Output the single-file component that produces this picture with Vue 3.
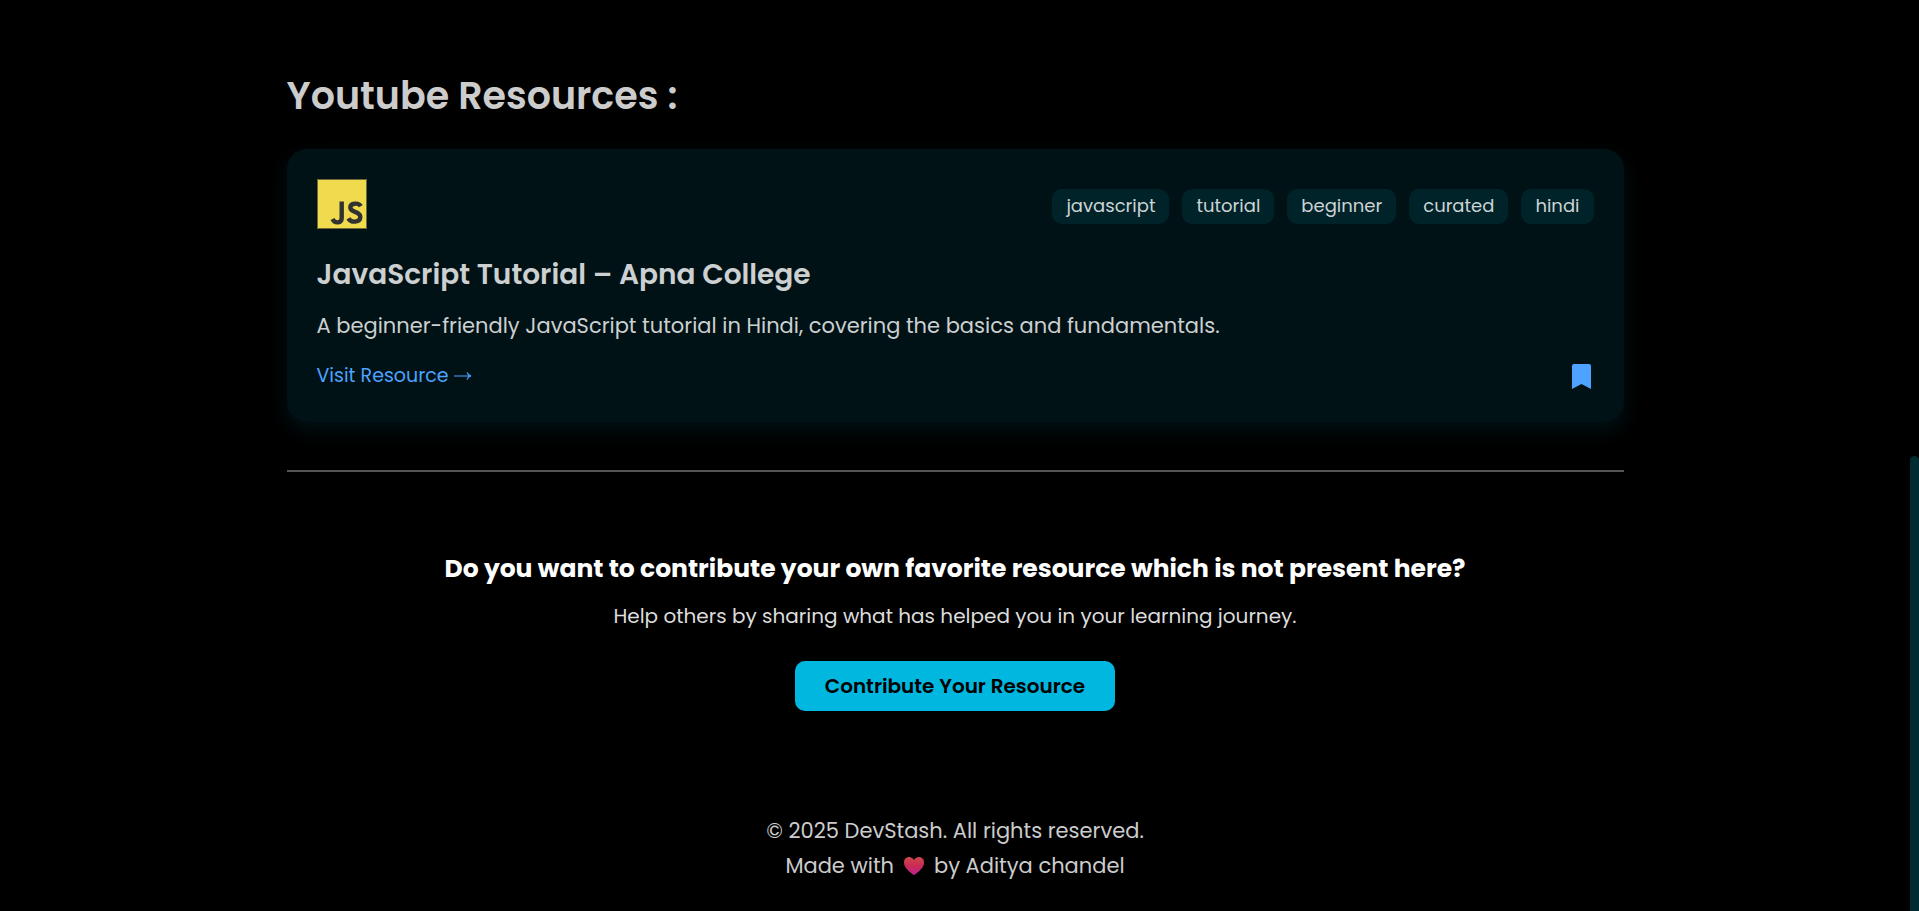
<script setup>
const tags = ['javascript', 'tutorial', 'beginner', 'curated', 'hindi']
</script>

<template>
  <div class="page">
    <div class="content">
      <main class="wrap">
        <h1 class="heading">Youtube Resources :</h1>

        <article class="card">
          <div class="card-top">
            <svg class="logo" viewBox="0 0 50 50" role="img" aria-label="JavaScript">
              <rect width="50" height="50" fill="#6f6a35" />
              <rect x="1" y="1" width="48" height="48" fill="#f0db4f" />
              <g fill="none" stroke="#323330" stroke-width="4.4">
                <path d="M24.7 22.500v16.500c0 5.300-6.700 6-9.200 1" />
                <path d="M43.700 27.200c-2-3.800-10.400-3.300-10.400 1.300 0 5.400 10 3.200 10 9.300 0 6-9.200 6.300-11.900 1.500" />
              </g>
            </svg>
            <ul class="tags">
              <li v-for="tag in tags" :key="tag" class="tag">{{ tag }}</li>
            </ul>
          </div>
          <h2 class="title">JavaScript Tutorial – Apna College</h2>
          <p class="desc">A beginner-friendly JavaScript tutorial in Hindi, covering the basics and fundamentals.</p>
          <div class="card-bottom">
            <a class="visit" href="#">Visit Resource
              <svg class="arrow" viewBox="0 0 18 10" aria-hidden="true">
                <path d="M0 5h17M13 1.500c.8 2 2 3 4 3.500-2 .5-3.200 1.500-4 3.500" fill="none" stroke="currentColor" stroke-width="1.200" />
              </svg>
            </a>
            <button class="bookmark" type="button" aria-label="Remove bookmark">
              <svg viewBox="0 0 19 25" aria-hidden="true">
                <path d="M2 0h15a2 2 0 0 1 2 2v23l-9.500-5L0 25V2a2 2 0 0 1 2-2z" fill="#4da3ff" />
              </svg>
            </button>
          </div>
        </article>

        <hr class="rule" />

        <section class="contribute">
          <h2 class="ask">Do you want to contribute your own favorite resource which is not present here?</h2>
          <p class="help">Help others by sharing what has helped you in your learning journey.</p>
          <button class="cta" type="button">Contribute Your Resource</button>
        </section>
      </main>

      <footer class="footer">
        <p>© 2025 DevStash. All rights reserved.</p>
        <p class="made">
          <span>Made with</span>
          <svg class="heart" viewBox="0 0 20 18" role="img" aria-label="love">
            <defs>
              <linearGradient id="heart-fill" x1="0" y1="0" x2="0" y2="1">
                <stop offset="0" stop-color="#d0494c" />
                <stop offset="0.5" stop-color="#ca2a54" />
                <stop offset="1" stop-color="#bc2494" />
              </linearGradient>
            </defs>
            <path d="M10 3C8.500.8 6.800 0 5 0 2.200 0 0 2.300 0 5.400 0 10.500 5.500 15 10 18c4.500-3 10-7.500 10-12.600C20 2.300 17.800 0 15 0c-1.800 0-3.500.8-5 3z" fill="url(#heart-fill)" />
          </svg>
          <span>by Aditya chandel</span>
        </p>
      </footer>
    </div>
    <div class="rail" aria-hidden="true"><div class="thumb"></div></div>
  </div>
</template>

<style>
body {
  background: #000;
}
</style>

<style scoped>
.page {
  display: grid;
  grid-template-columns: 1fr 9px;
  min-height: 100vh;
  background: #000;
  color: #ccc;
  font-family: Poppins, Inter, "Open Sans", sans-serif;
}
h1, h2, p, ul {
  margin: 0;
  padding: 0;
}
.wrap {
  width: 70%;
  margin: 0 auto;
}
.heading {
  padding-top: 66px;
  font-size: 38px;
  line-height: 60px;
  font-weight: 600;
}
.card {
  margin-top: 23px;
  padding: 30px 30px 28px;
  border-radius: 20px;
  background: #001216;
  box-shadow: 0 8px 20px #001216;
}
.card-top {
  display: flex;
  align-items: center;
  justify-content: space-between;
}
.logo {
  width: 50px;
  height: 50px;
}
.tags {
  display: flex;
  flex-wrap: wrap;
  gap: 13px;
  margin-top: 4px;
  list-style: none;
}
.tag {
  padding: 3px 14px 5px;
  border-radius: 10px;
  background: #00232a;
  color: #ccd4d5;
  font-size: 18px;
  line-height: 27px;
}
.title {
  margin-top: 25px;
  font-size: 28px;
  line-height: 42px;
  font-weight: 600;
  color: #ccd0d1;
}
.desc {
  margin-top: 13px;
  font-size: 21px;
  line-height: 33px;
  color: #ccd0d1;
}
.card-bottom {
  display: flex;
  justify-content: space-between;
  align-items: center;
  margin-top: 16px;
  height: 36px;
}
.visit {
  display: flex;
  align-items: center;
  gap: 5px;
  color: #4da3ff;
  font-size: 19px;
  line-height: 28px;
  text-decoration: none;
}
.arrow {
  width: 18px;
  height: 10px;
}
.bookmark {
  padding: 0;
  margin-right: 3px;
  border: 0;
  background: none;
  cursor: pointer;
}
.bookmark svg {
  display: block;
  width: 19px;
  height: 25px;
}
.rule {
  margin: 48px 0 0;
  border: 0;
  height: 2px;
  background: #555;
}
.contribute {
  display: flex;
  flex-direction: column;
  align-items: center;
  margin-top: 78px;
  text-align: center;
}
.ask {
  font-size: 25px;
  line-height: 38px;
  font-weight: 700;
  color: #fff;
}
.help {
  margin-top: 13px;
  font-size: 20px;
  line-height: 30px;
  color: #ddd;
}
.cta {
  margin-top: 30px;
  height: 50px;
  padding: 0 30px;
  border: 0;
  border-radius: 10px;
  background: #00b7e0;
  color: #000;
  font-family: inherit;
  font-size: 20px;
  font-weight: 600;
  cursor: pointer;
}
.footer {
  margin-top: 102px;
  padding-bottom: 24px;
  text-align: center;
  font-size: 21px;
  line-height: 35px;
}
.made {
  display: flex;
  justify-content: center;
  align-items: center;
  gap: 10px;
}
.heart {
  width: 20px;
  height: 18px;
}
.rail {
  display: flex;
  flex-direction: column;
  justify-content: flex-end;
}
.thumb {
  height: 50%;
  border-radius: 5px 5px 0 0;
  background: #002b33;
}
</style>
